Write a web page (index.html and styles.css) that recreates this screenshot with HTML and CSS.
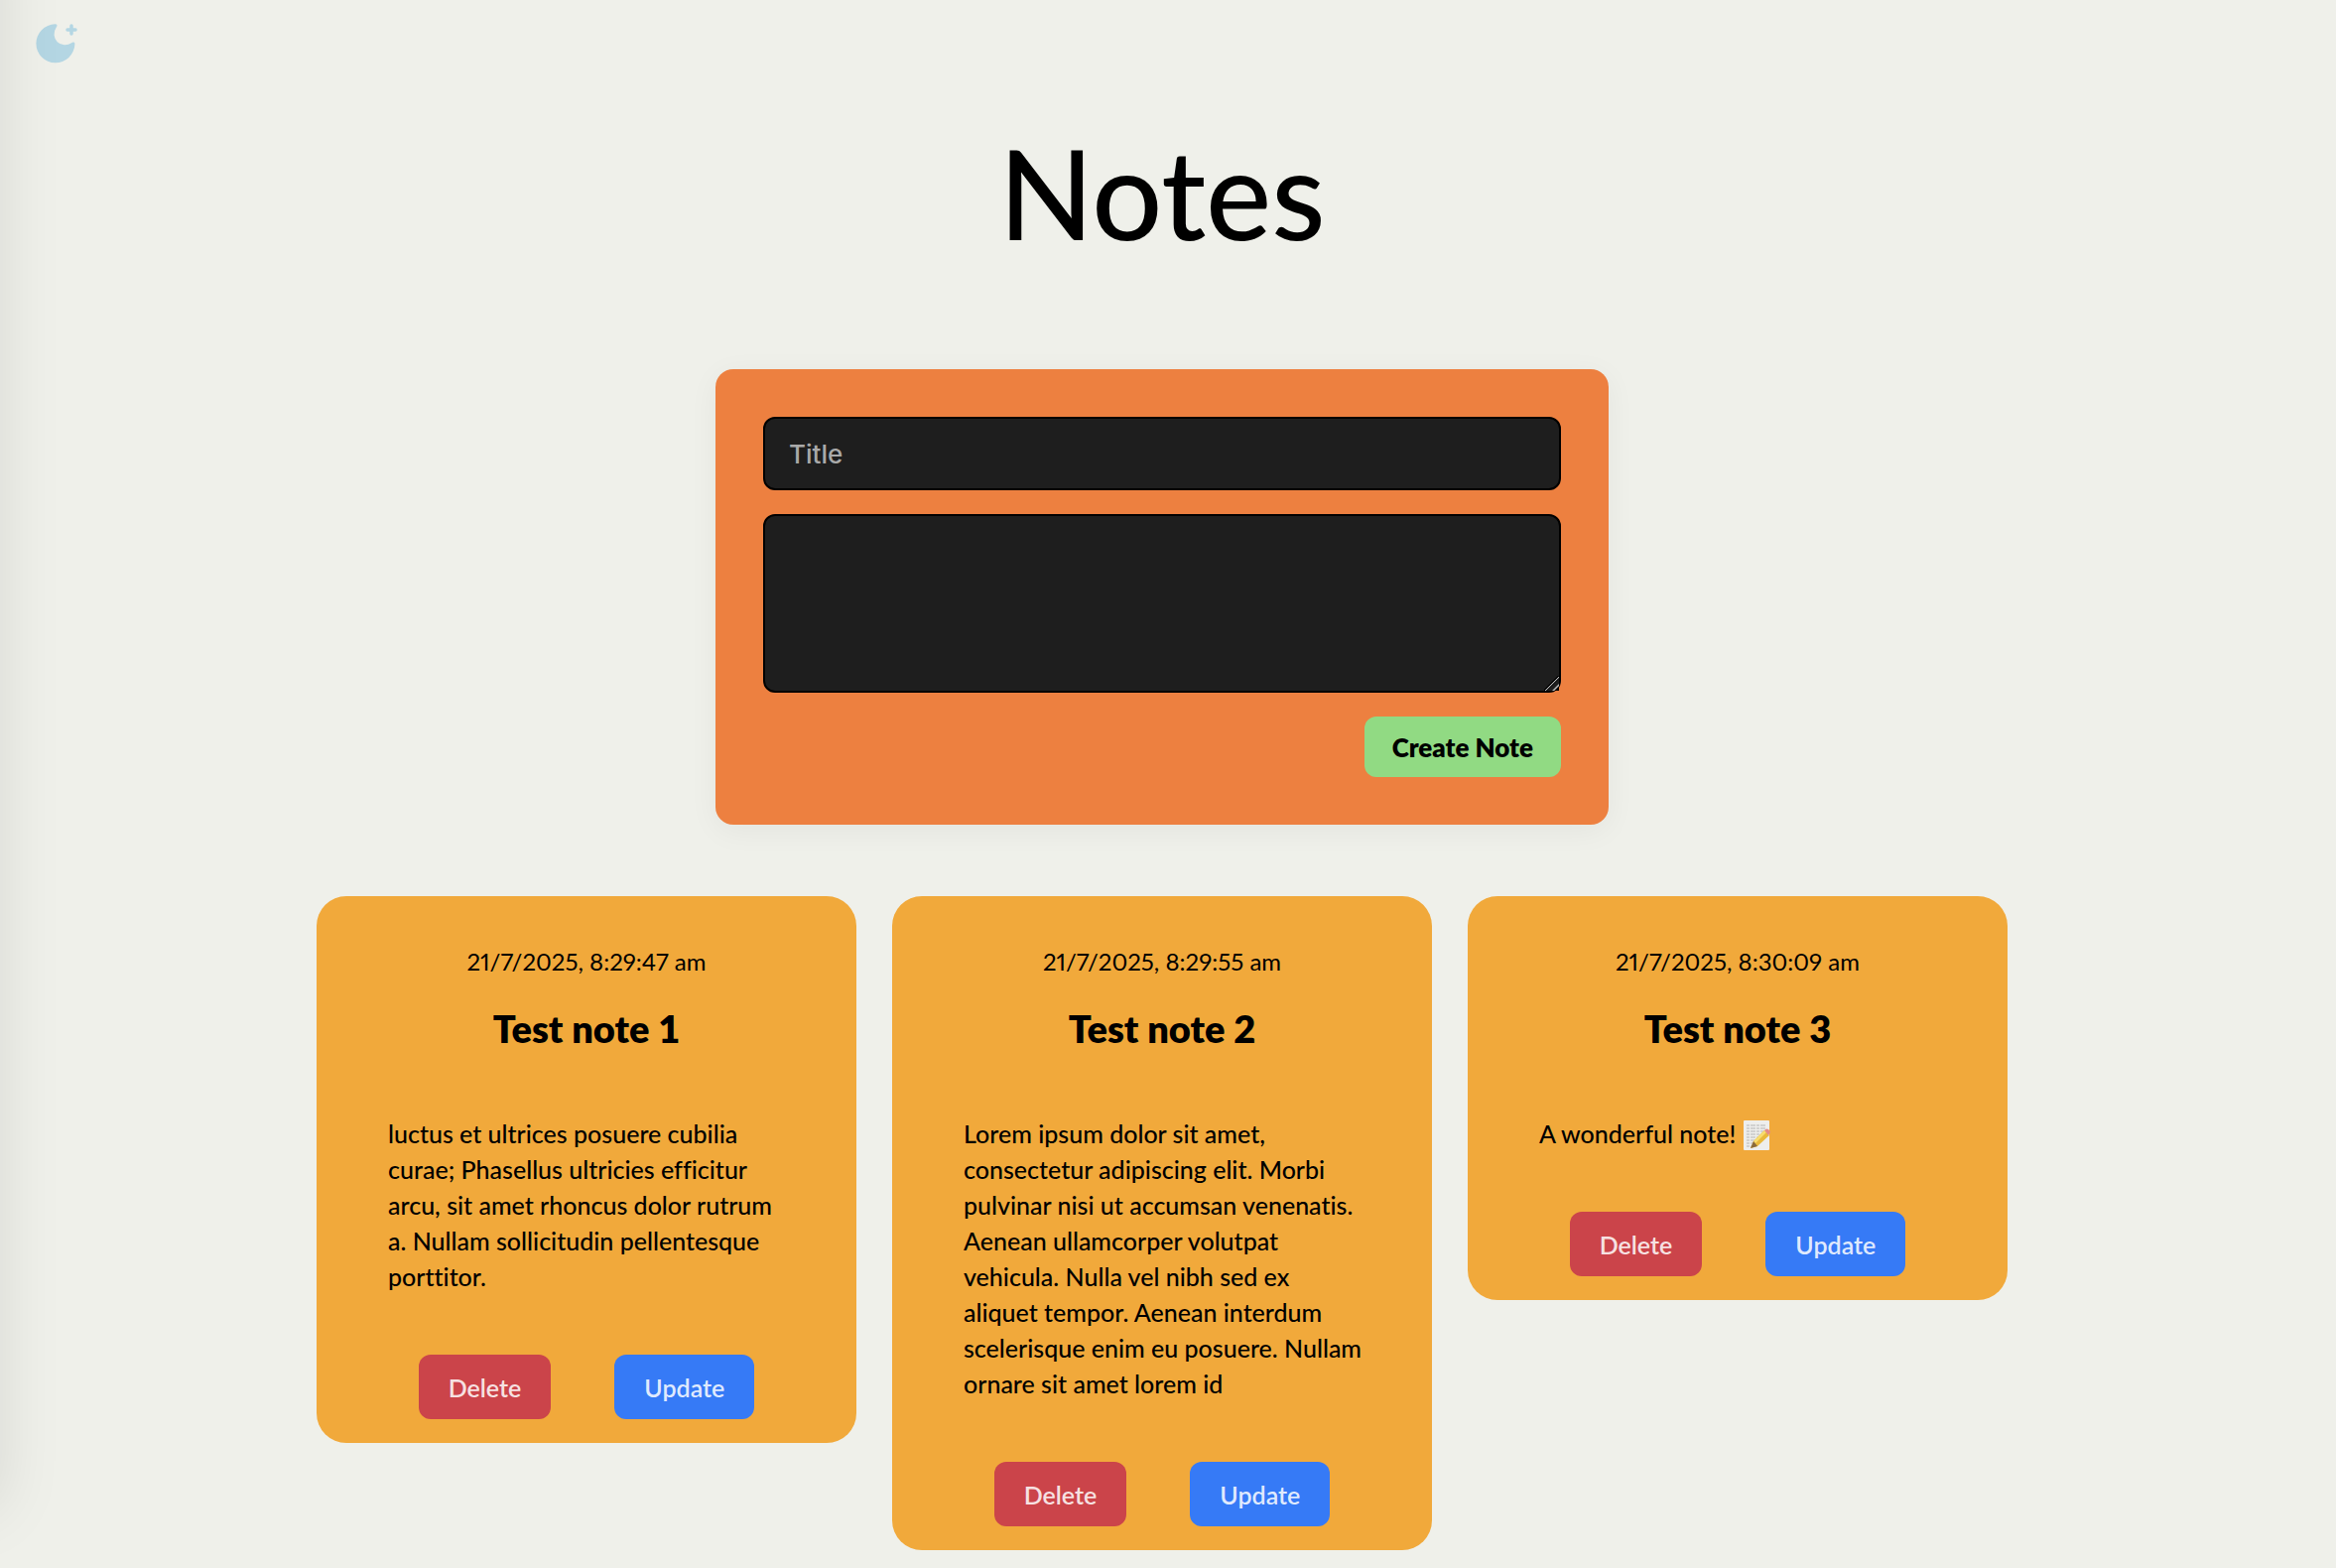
FILE: index.html
```html
<!DOCTYPE html>
<html lang="en">
<head>
<meta charset="utf-8">
<title>Notes</title>
<link rel="stylesheet" href="styles.css">
</head>
<body>
<div class="drawer"></div>
<header class="topbar">
  <button class="theme-toggle" type="button" aria-label="Toggle dark mode">
    <svg class="moon" viewBox="0 0 48 48" aria-hidden="true">
      <path d="M21.500 4.300A19.500 19.500 0 1 0 41.400 24.500C41.600 22.300 39.500 22 38 23.200A11 11 0 0 1 22.500 8C24.200 6 23.800 4.200 21.500 4.300Z" fill="#b4d6e3"/>
      <path d="M38 6V14M34 10H42" stroke="#b4d6e3" stroke-width="3.500" stroke-linecap="round"/>
    </svg>
  </button>
</header>
<main class="page">
  <h1 class="page-title">Notes</h1>
  <form class="note-form">
    <input class="field" type="text" placeholder="Title" aria-label="Title">
    <textarea class="field field-body" aria-label="Note"></textarea>
    <button class="btn btn-create" type="button">Create Note</button>
  </form>
  <section class="notes">
    <article class="note">
      <p class="note-date">21/7/2025, 8:29:47 am</p>
      <h2 class="note-title">Test note 1</h2>
      <p class="note-body">luctus et ultrices posuere cubilia<br>curae; Phasellus ultricies efficitur<br>arcu, sit amet rhoncus dolor rutrum<br>a. Nullam sollicitudin pellentesque<br>porttitor.</p>
      <div class="note-actions">
        <button class="btn btn-delete" type="button">Delete</button>
        <button class="btn btn-update" type="button">Update</button>
      </div>
    </article>
    <article class="note">
      <p class="note-date">21/7/2025, 8:29:55 am</p>
      <h2 class="note-title">Test note 2</h2>
      <p class="note-body">Lorem ipsum dolor sit amet,<br>consectetur adipiscing elit. Morbi<br>pulvinar nisi ut accumsan venenatis.<br>Aenean ullamcorper volutpat<br>vehicula. Nulla vel nibh sed ex<br>aliquet tempor. Aenean interdum<br>scelerisque enim eu posuere. Nullam<br>ornare sit amet lorem id</p>
      <div class="note-actions">
        <button class="btn btn-delete" type="button">Delete</button>
        <button class="btn btn-update" type="button">Update</button>
      </div>
    </article>
    <article class="note">
      <p class="note-date">21/7/2025, 8:30:09 am</p>
      <h2 class="note-title">Test note 3</h2>
      <p class="note-body">A wonderful note! <svg class="memo" viewBox="0 0 30 30" role="img" aria-label="memo"><rect x="1" width="26" height="30" rx="1" fill="#eeeeec"/><path d="M4 5H23M4 8H24M4 11H22M4 14H20M4 17H16M4 20H14M4 23H11M4 26H10" stroke="#b5b5b5" stroke-dasharray="3 1 5 1"/><path d="M8 28L11 21L22 10L27 15L15 26Z" fill="#e9b93a"/><path d="M11 21L22 10L24 12L13 23Z" fill="#f8dc6c"/><path d="M8 28L11 21L15 26Z" fill="#8a6a3c"/><path d="M22 10L24 8.500Q27 8.500 28 12L26 15Z" fill="#e58a86"/></svg></p>
      <div class="note-actions">
        <button class="btn btn-delete" type="button">Delete</button>
        <button class="btn btn-update" type="button">Update</button>
      </div>
    </article>
  </section>
</main>
</body>
</html>
```
FILE: styles.css
```css
* {
  box-sizing: border-box;
}

body {
  margin: 0;
  padding-right: 12px;
  background: #eff0ea;
  color: #000;
  font-family: Lato, "Noto Sans", sans-serif;
  font-size: 25px;
  font-weight: 500;
  font-variant-ligatures: none;
  line-height: 36px;
}

h1, h2, p {
  margin: 0;
}

.drawer {
  position: fixed;
  top: -60px;
  bottom: 60px;
  left: -300px;
  width: 300px;
  box-shadow: 0 0 60px rgba(0, 0, 0, 0.1);
}

.topbar {
  display: flex;
  height: 96px;
  padding: 20px 34px;
}

.theme-toggle {
  width: 48px;
  height: 48px;
  padding: 0;
  border: 0;
  background: none;
}

.moon {
  display: block;
  width: 48px;
  height: 48px;
  fill: none;
}

.page {
  display: flex;
  flex-direction: column;
  align-items: center;
}

.page-title {
  margin: 8px 0 88px;
  font-size: 125px;
  font-weight: 500;
  line-height: 180px;
}

.note-form {
  display: flex;
  flex-direction: column;
  gap: 24px;
  width: 100%;
  max-width: 900px;
  padding: 48px;
  border-radius: 18px;
  background: #ed8040;
  box-shadow: 0 6px 30px rgba(0, 0, 0, 0.05);
}

.field {
  display: block;
  width: 100%;
  height: 74px;
  padding: 0 24px;
  border: 2px solid #000;
  border-radius: 12px;
  background: #1e1e1e;
  color: #fff;
  font: 500 26px Inter, sans-serif;
}

.field::placeholder {
  color: #a9a9a9;
}

.field-body {
  height: 180px;
  padding: 18px 24px;
  resize: vertical;
}

.field-body::-webkit-resizer {
  background: linear-gradient(135deg, transparent 46%, #000 47%, #000 50%, #bbb 51%, #bbb 56%, #000 57%, #1e1e1e 62%, #1e1e1e 74%, #000 75%, #bbb 78%, #bbb 83%, #000 84%);
}

.btn {
  border: 0;
  border-radius: 12px;
  font: inherit;
}

.btn-create {
  align-self: flex-end;
  height: 61px;
  padding: 0 28px;
  background: #91da83;
  color: #000;
  font-size: 26px;
  font-weight: 800;
}

.notes {
  display: grid;
  grid-template-columns: repeat(3, minmax(0, 1fr));
  align-items: start;
  gap: 36px;
  width: 100%;
  max-width: 1704px;
  margin-top: 72px;
}

.note {
  padding: 48px 72px 24px;
  border-radius: 30px;
  background: #f1a93b;
}

.note-date {
  font-size: 24px;
  font-variant-numeric: proportional-nums;
  font-weight: 400;
  text-align: center;
}

.note-title {
  margin: 22px 0 61px;
  font-size: 38px;
  font-weight: 800;
  line-height: 54px;
  text-align: center;
}

.note-body {
  white-space: nowrap;
}

.memo {
  width: 30px;
  height: 30px;
  vertical-align: -7px;
}

.note-actions {
  display: flex;
  justify-content: center;
  gap: 64px;
  margin-top: 61px;
}

.btn-delete,
.btn-update {
  height: 65px;
  padding: 0 30px;
  color: rgba(255, 255, 255, 0.85);
  font-weight: 600;
}

.btn-delete {
  background: #cb444a;
}

.btn-update {
  background: #367af6;
}
```
